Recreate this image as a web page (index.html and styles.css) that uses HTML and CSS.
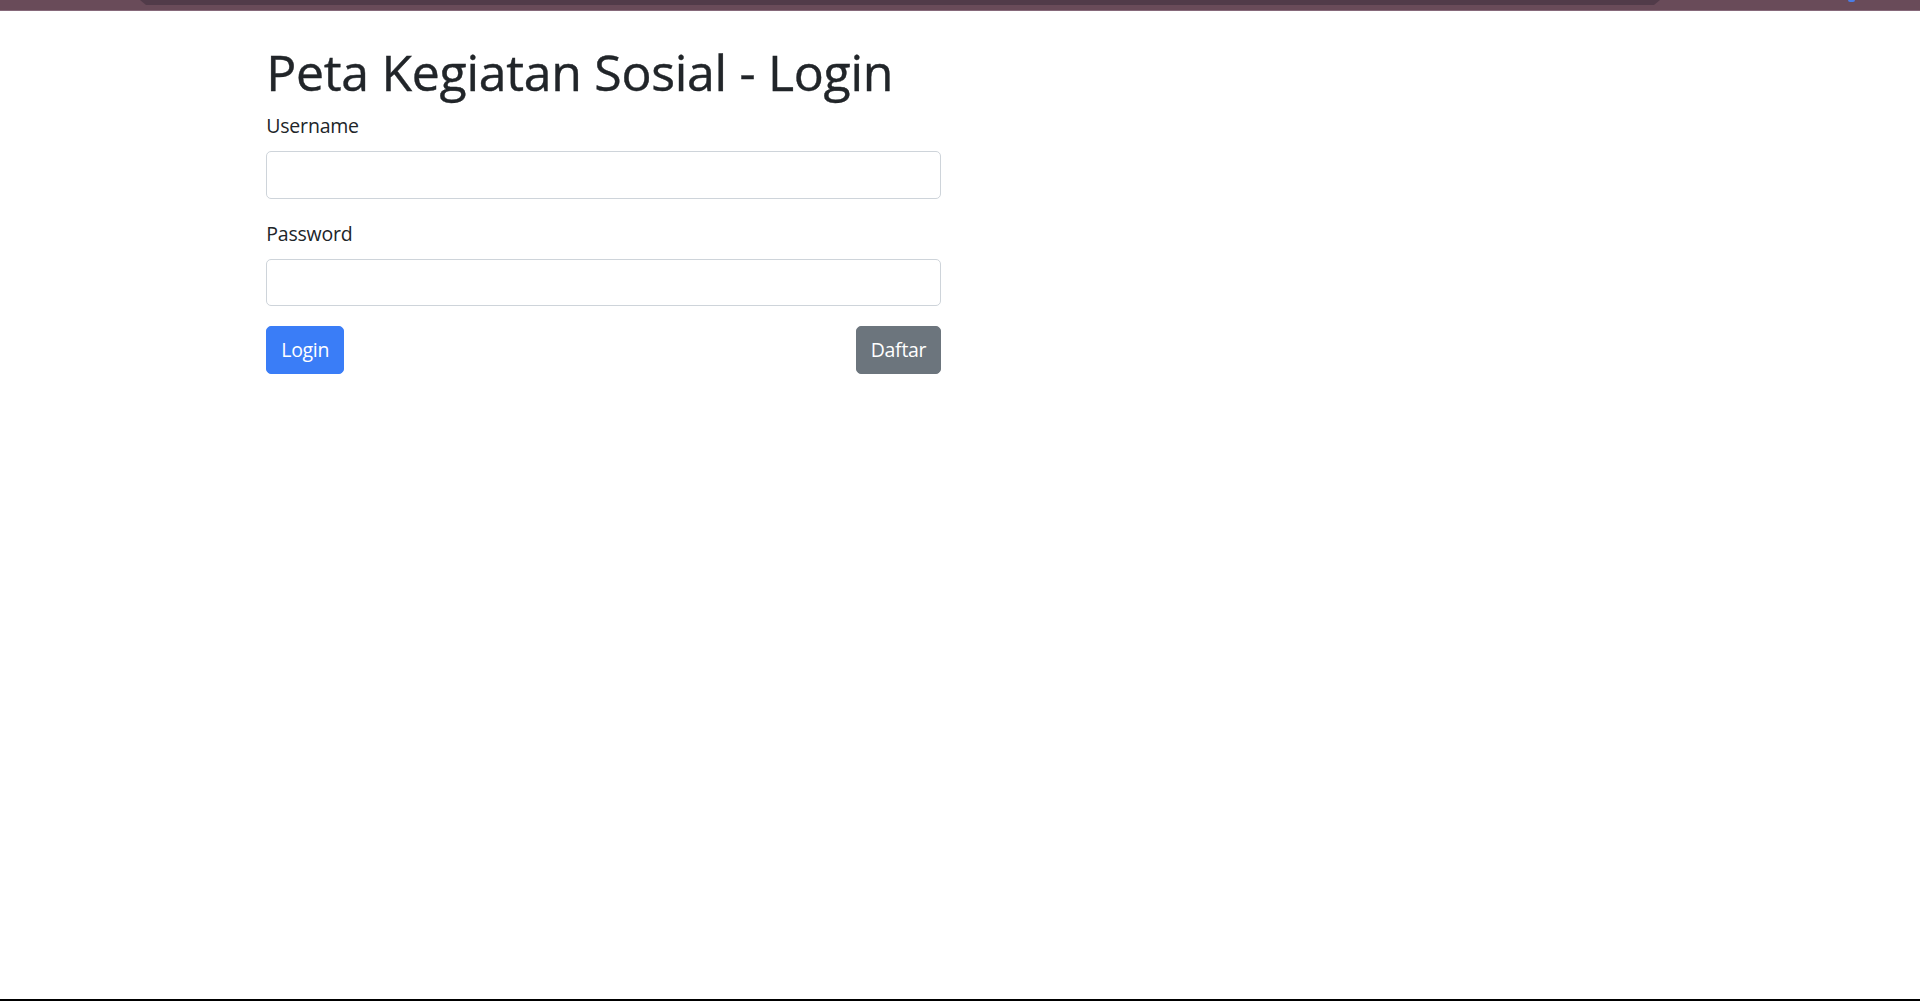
FILE: index.html
```html
<!DOCTYPE html>
<html lang="id">
<head>
<meta charset="utf-8">
<title>Peta Kegiatan Sosial - Login</title>
<link rel="stylesheet" href="styles.css">
</head>
<body>
<div class="topbar"><div class="topbar-tab"></div><div class="topbar-dot"></div></div>
<main class="page">
  <div class="container">
    <div class="col">
      <h1 class="title">Peta Kegiatan Sosial - Login</h1>
      <form class="form">
        <div class="form-group">
          <label class="label" for="username">Username</label>
          <input class="input" id="username" type="text">
        </div>
        <div class="form-group">
          <label class="label" for="password">Password</label>
          <input class="input" id="password" type="password">
        </div>
        <div class="actions">
          <button type="button" class="btn btn-primary">Login</button>
          <button type="button" class="btn btn-secondary">Daftar</button>
        </div>
      </form>
    </div>
  </div>
</main>
<div class="bottomline"></div>
</body>
</html>
```
FILE: styles.css
```css
* { box-sizing: border-box; }
html, body { margin: 0; padding: 0; }
body {
  height: 1001px;
  display: flex;
  flex-direction: column;
  background: #fff;
  color: #212529;
  font-family: "Segoe UI", "Open Sans", "Noto Sans", sans-serif;
  overflow: hidden;
}
.topbar {
  position: relative;
  height: 11px;
  flex: 0 0 11px;
  background: #694b59;
  border-bottom: 1px solid #86697a;
}
.topbar-tab {
  position: absolute;
  left: 140px;
  right: 260px;
  top: 0;
  height: 5px;
  background: #513b49;
  clip-path: polygon(0 0, 100% 0, calc(100% - 6px) 100%, 6px 100%);
}
.topbar-dot {
  position: absolute;
  left: 1848px;
  top: 0;
  width: 7px;
  height: 2px;
  border-radius: 0 0 4px 4px;
  background: #4a7de6;
}
.page { flex: 1; }
.container {
  max-width: 1425px;
  margin: 0 auto;
  padding: 31px 18.75px 0;
}
.col { width: 675px; }
.title {
  margin: 0 0 9px;
  font-size: 50px;
  font-weight: 500;
  letter-spacing: -0.3px;
  line-height: 1.2;
  -webkit-text-stroke: 0.4px #212529;
}
.form-group { margin-bottom: 20px; }
.label {
  display: inline-block;
  margin-bottom: 10px;
  font-size: 19.5px;
  letter-spacing: -0.2px;
  line-height: 30px;
}
.input {
  display: block;
  width: 100%;
  height: 47.5px;
  padding: 7.5px 15px;
  font: inherit;
  font-size: 20px;
  border: 1.25px solid #ced4da;
  border-radius: 5px;
  background: #fff;
  color: #495057;
  outline: none;
}
.actions {
  display: flex;
  justify-content: space-between;
}
.btn {
  height: 47.5px;
  padding: 7.5px 14px;
  font: inherit;
  font-size: 19.5px;
  letter-spacing: -0.3px;
  line-height: 30px;
  border: 1.25px solid transparent;
  border-radius: 5px;
  color: #fff;
  cursor: pointer;
}
.btn-primary { background: #3a7df7; border-color: #3a7df7; }
.btn-secondary { background: #6c757d; border-color: #6c757d; }
.bottomline {
  flex: 0 0 2px;
  background: #000;
}
```
